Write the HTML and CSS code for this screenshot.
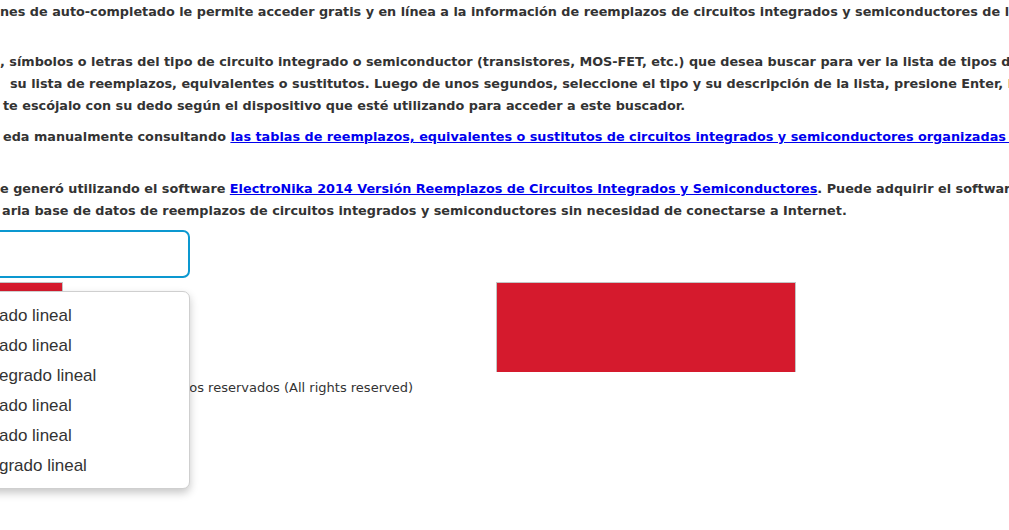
FILE: index.html
```html
<!DOCTYPE html>
<html lang="es">
<head>
<meta charset="utf-8">
<title>Buscador de reemplazos</title>
<link rel="stylesheet" href="styles.css">
</head>
<body>
<div class="page">
  <div class="text">
    <p class="para p1"><span class="line">nes de auto-completado le permite acceder gratis y en línea a la información de reemplazos de circuitos integrados y semiconductores de la base de datos.</span></p>
    <p class="para p2">
      <span class="line">, símbolos o letras del tipo de circuito integrado o semiconductor (transistores, MOS-FET, etc.) que desea buscar para ver la lista de tipos de dispositivos</span>
      <span class="line in10">su lista de reemplazos, equivalentes o sustitutos. Luego de unos segundos, seleccione el tipo y su descripción de la lista, presione Enter, haga clic</span>
      <span class="line in3">te escójalo con su dedo según el dispositivo que esté utilizando para acceder a este buscador.</span>
    </p>
    <p class="para p3">
      <span class="line in3">eda manualmente consultando <a href="#">las tablas de reemplazos, equivalentes o sustitutos de circuitos integrados y semiconductores organizadas alfabéticamente</a></span>
    </p>
    <p class="para p4">
      <span class="line">e generó utilizando el software <a href="#">ElectroNika 2014 Versión Reemplazos de Circuitos Integrados y Semiconductores</a>. Puede adquirir el software para</span>
      <span class="line in2">aria base de datos de reemplazos de circuitos integrados y semiconductores sin necesidad de conectarse a Internet.</span>
    </p>
  </div>

  <div class="search">
    <input class="search-input" type="text" aria-label="Buscar">
    <ul class="suggest">
      <li>ado lineal</li>
      <li>ado lineal</li>
      <li>egrado lineal</li>
      <li>ado lineal</li>
      <li>ado lineal</li>
      <li>grado lineal</li>
    </ul>
  </div>

  <div class="ads">
    <div class="ad ad-left"></div>
    <div class="ad ad-right"></div>
  </div>

  <div class="footer">Todos los derechos reservados (All rights reserved)</div>
</div>
</body>
</html>
```
FILE: styles.css
```css
html, body {
  margin: 0;
  padding: 0;
  background: #fff;
  overflow: hidden;
}
body {
  width: 1009px;
  height: 530px;
}
.page {
  position: relative;
  font-family: "DejaVu Sans", Verdana, sans-serif;
  color: #333;
}
.text {
  font-size: 12.8px;
  font-weight: bold;
  line-height: 22px;
}
.para {
  margin: 0;
}
.line {
  display: block;
  white-space: nowrap;
}
.in2 { padding-left: 2px; }
.in3 { padding-left: 3px; }
.in10 { padding-left: 10px; }
.p1 { padding-top: 1px; }
.p2 { margin-top: 28px; }
.p3 { margin-top: 9px; }
.p4 { margin-top: 30px; }
.text a {
  color: #0000ee;
  text-decoration: underline;
}

.search {
  position: relative;
  margin-top: 8px;
  width: 190px;
}
.search-input {
  display: block;
  box-sizing: border-box;
  width: 210px;
  margin-left: -20px;
  height: 48px;
  border: 2px solid #0c98d0;
  border-radius: 7px;
  outline: none;
  background: #fff;
}
.suggest {
  position: absolute;
  z-index: 5;
  top: 61px;
  left: -20px;
  width: 210px;
  height: 198px;
  box-sizing: border-box;
  margin: 0;
  padding: 9px 0 0 18px;
  list-style: none;
  background: #fff;
  border: 1px solid #cfcfcf;
  border-radius: 7px;
  box-shadow: 0 4px 8px rgba(0, 0, 0, 0.22);
  font-family: "Liberation Sans", Arial, sans-serif;
  font-size: 17px;
  color: #333;
}
.suggest li {
  height: 30px;
  line-height: 30px;
  white-space: nowrap;
}

.ads {
  display: flex;
  gap: 433px;
  margin-top: 4px;
}
.ad {
  box-sizing: border-box;
  height: 90px;
  background: #d51a2d;
  border: 1px solid #c4c4c4;
  border-bottom: none;
}
.ad-left {
  width: 63px;
  border-left: none;
}
.ad-right {
  width: 300px;
}

.footer {
  width: 413px;
  margin-top: 7px;
  text-align: right;
  font-size: 13px;
  line-height: 18px;
  white-space: nowrap;
}
```
